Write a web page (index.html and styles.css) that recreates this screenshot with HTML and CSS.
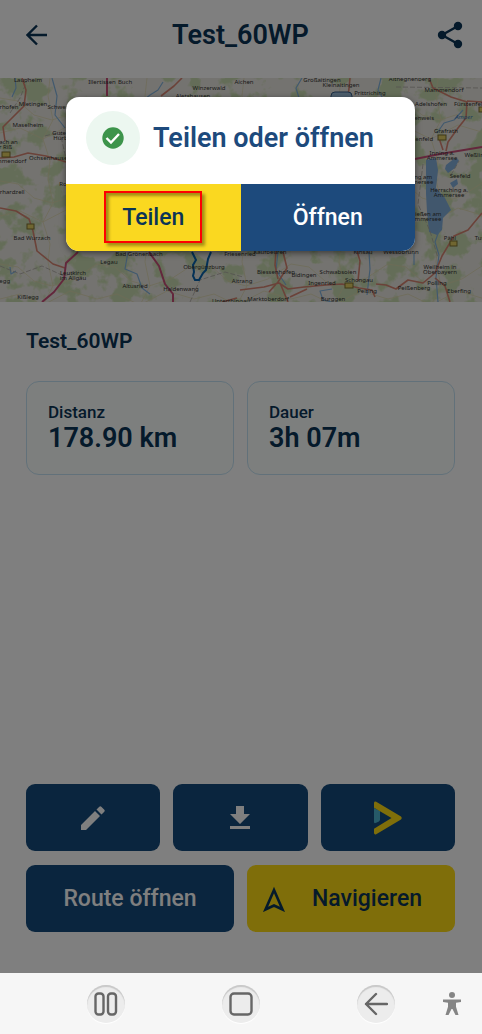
FILE: index.html
```html
<!doctype html>
<html lang="de">
<head>
	<meta charset="UTF-8">
	<meta name="viewport" content="width=device-width, initial-scale=1.0">
	<title>Test_60WP</title>
	<link rel="stylesheet" href="styles.css">
</head>
<body>
	<div class="app">
		<header class="header">
			<button class="icon-btn" type="button" aria-label="Zurück">
				<svg width="22" height="22" viewBox="0 0 22 22"><path d="M21 11H2M11 1.5 1.5 11l9.500 9.500" fill="none" stroke="#0b3456" stroke-width="2.400"/></svg>
			</button>
			<h1 class="title">Test_60WP</h1>
			<button class="icon-btn" type="button" aria-label="Route teilen">
				<svg width="26" height="28" viewBox="0 0 26 28"><path d="M21 5 5 14l16 9" fill="none" stroke="#0b3456" stroke-width="2.400"/><g fill="#0b3456"><circle cx="21" cy="5" r="4.200"/><circle cx="5" cy="14" r="4.200"/><circle cx="21" cy="23" r="4.200"/></g></svg>
			</button>
		</header>

		<svg class="map" viewBox="0 0 482 224" preserveAspectRatio="xMidYMid slice" role="img" aria-label="Karte">
			<defs>
				<!-- woods: noise cut off at a threshold -->
				<filter id="woods" x="0" y="0" width="100%" height="100%" color-interpolation-filters="sRGB">
					<feTurbulence type="fractalNoise" baseFrequency="0.045" numOctaves="4" seed="8"/>
					<feColorMatrix values="0 0 0 0 0.79  0 0 0 0 0.86  0 0 0 0 0.69  9 0 0 0 -4.5"/>
				</filter>
				<pattern id="lanes" width="97" height="83" patternUnits="userSpaceOnUse">
					<path d="M0 20l18 3 16 14 18 5 22-7 23-15M50 0l-2 18 5 24-10 19 7 22M0 55l20-5 23 11 27-14 27 8" fill="none" stroke="#dcd6ac" stroke-width=".7"/>
				</pattern>
			</defs>
			<rect width="482" height="224" fill="#e9e7e0"/>
			<rect width="482" height="224" filter="url(#woods)"/>
			<rect width="482" height="224" fill="url(#lanes)"/>

			<g fill="#82aedb">
				<path d="M426 82l10-2 2 12-2 18 9 10 6 12-8 8-1 12-5 5-8-3-2-20-1-18z"/>
				<path d="M446 87l9-7 4 2-4 8-7 5-3-4zM450 105l7-4 1 5-5 4z"/>
			</g>
			<g class="river">
				<path d="M15 0l1 10-4 9M52 0l5 18-2 19 10 13M163 4l-5 8-8 5-10 8M302 0l-6 10 3 10M381 0l-3 12 7 12M463 32l-9 10-10 3-7 10M440 150l-5 14 4 13-3 22 2 25M414 175v12M128 174l-3 17 12 5 5 14 8 6M369 174l1 17-3 26M278 174l-2 18 10 15M10 189l1 7 5-3M332 224l-9-2-3-9 12-2"/>
			</g>
			<g class="border-line">
				<path d="M28 0l-8 20-10 15M45 58l15-4 6 27M0 188l20 8 22-8 22 10 15-5M190 224l10-22 25-8 18 5M406 30l14 10M451 97l8-14M423 86l-5 40 12 27 8 27M396 9l86 1"/>
			</g>
			<g class="road">
				<path d="M22 0l4 12-2 16-13 13-8 8 2 14M0 80l14-1 14-4 18 3 20 6M0 130l16 3 13 8 4 12 4 20 16 13 12 4M182 0l-8 8-13 10M350 0l-2 20M429 0l4 10 18 9 16 5-1 16-8 10-10 14-2 9M482 135l-14 17-14 6-12 20-7 17-12 10-15-3-12 9-10-4-10-1M443 72l-4-12M276 172l-1 15 3 14M283 174l4 16-9 14-9 10M240 212l24-3 15-4 9 6 16-2 22-2 16-1 17 4 13 2 3 7M435 200l10 8 5 16M357 173l3 10-2 20M222 224l15-4M290 219l17-8M280 205l8 19M467 23l15 1"/>
			</g>
			<g class="motorway">
				<path d="M107 0v18M78 174l-12 11-2 16-10 13-12 10M149 174l10 14 6 18 8 10v8M415 81l25-5 42-7"/>
			</g>
			<path d="M192 174l4 8-3 5 1 7-1 4 2 4 4 0 4-7 3-3 2-11 3-7" fill="none" stroke="#0863ad" stroke-width="2"/>
			<rect x="331" y="14" width="21" height="9" rx="4" fill="#9bbcdb" stroke="#365f89"/>
			<g class="shield">
				<rect x="2" y="74" width="8" height="5"/><rect x="27" y="146" width="7" height="5"/>
				<rect x="345" y="205" width="8" height="5"/><rect x="450" y="163" width="7" height="5"/>
				<rect x="438" y="57" width="8" height="5"/><rect x="479" y="29" width="7" height="5"/>
			</g>

			<g class="label">
				<text x="28" y="4">Laupheim</text><text x="102" y="6">Illertissen</text><text x="125" y="6">Buch</text>
				<text x="209" y="12">Winzerwald</text><text x="193" y="20">Aletshausen</text><text x="244" y="6">Aichen</text>
				<text x="33" y="28">Mietingen</text><text x="3" y="31">Oberhofen</text><text x="61" y="31">Schwendi</text>
				<text x="28" y="49">Maselheim</text><text x="62" y="57">Guten-</text><text x="63" y="62">Hürbel</text>
				<text x="1" y="66">Biberach an</text><text x="2" y="71">der Riß</text><text x="9" y="85">Ummendorf</text>
				<text x="50" y="82">Ochsenhausen</text><text x="64" y="108">Rot</text><text x="7" y="116">Eberhardzell</text>
				<text x="32" y="162">Bad Wurzach</text><text x="73" y="197">Leutkirch</text><text x="73" y="202">im Allgäu</text>
				<text x="28" y="221">Kißlegg</text><text x="-2" y="205">Bergegg</text><text x="109" y="186">Legau</text>
				<text x="139" y="178">Bad Grönenbach</text><text x="135" y="210">Altusried</text><text x="181" y="213">Haldenwang</text>
				<text x="204" y="191">Obergünzburg</text><text x="240" y="178">Friesenried</text><text x="242" y="205">Aitrang</text>
				<text x="231" y="225">Unterthingau</text><text x="270" y="176">Kaufbeuren</text><text x="276" y="196">Biessenhofen</text>
				<text x="304" y="199">Bidingen</text><text x="338" y="196">Schwabsoien</text><text x="322" y="207">Ingenried</text>
				<text x="359" y="204">Schongau</text><text x="367" y="215">Peiting</text><text x="268" y="223">Marktoberdorf</text>
				<text x="333" y="223">Burggen</text><text x="363" y="176">Kinsau</text><text x="401" y="176">Wessobrunn</text>
				<text x="322" y="4">Großaitingen</text><text x="341" y="9">Kleinaitingen</text><text x="370" y="17">Prittriching</text>
				<text x="410" y="3">Althegnenberg</text><text x="444" y="14">Mammendorf</text><text x="431" y="28">Adelshofen</text>
				<text x="470" y="28">Fürstenfeld</text><text x="418" y="42">Türkenweis</text><text x="464" y="41" class="label-water">Amper</text>
				<text x="446" y="55">Grafrath</text><text x="418" y="63">Türkenfeld</text><text x="442" y="77">Inning a.</text>
				<text x="442" y="82">Ammersee</text><text x="476" y="79">Weßling</text><text x="418" y="101">Utting am</text>
				<text x="418" y="106">Ammersee</text><text x="460" y="100">Seefeld</text><text x="449" y="114">Herrsching a.</text>
				<text x="449" y="119">Ammersee</text><text x="426" y="138">Dießen am</text><text x="426" y="143">Ammersee</text>
				<text x="450" y="162">Pähl</text><text x="485" y="162">Tutzing</text><text x="440" y="191">Weilheim in</text>
				<text x="440" y="196">Oberbayern</text><text x="437" y="207">Polling</text><text x="414" y="212">Peißenberg</text>
				<text x="459" y="215">Eberfing</text>
			</g>
		</svg>

		<main class="content">
			<h2 class="route-name">Test_60WP</h2>
			<dl class="stats">
				<div class="stat">
					<dt>Distanz</dt>
					<dd>178.90 km</dd>
				</div>
				<div class="stat">
					<dt>Dauer</dt>
					<dd>3h 07m</dd>
				</div>
			</dl>

			<div class="actions">
				<div class="row">
					<button class="btn" type="button" aria-label="Bearbeiten">
						<svg width="26" height="26" viewBox="0 0 26 26"><path d="M1 20v5h5L20 11l-5-5zM16.500 4.500l5 5 2.800-2.800q1-1 0-2L21.300 1.700q-1-1-2 0z" fill="#fff"/></svg>
					</button>
					<button class="btn" type="button" aria-label="Herunterladen">
						<svg width="20" height="24" viewBox="0 0 20 24"><path d="M6 0h8v8h6L10 18 0 8h6zM0 20h20v3H0z" fill="#fff"/></svg>
					</button>
					<button class="btn" type="button" aria-label="Abspielen">
						<svg width="28" height="34" viewBox="0 0 28 34"><path d="M0 7l6 3v8.500q0 1.500-1.500 2.300L1.500 22Q0 22.500 0 21z" fill="#4cb5d1"/><path d="M0 2Q.2 0 2.200.7L27 15.500q1.400 1.500 0 3L2.200 33.300Q.2 34 0 32v-4.200L17.500 17 0 6.800z" fill="#fedc14"/></svg>
					</button>
				</div>
				<div class="row">
					<button class="btn" type="button">Route öffnen</button>
					<button class="btn btn-yellow" type="button">
						<svg width="22" height="26" viewBox="0 0 22 26"><path d="M11 4 2.500 23.500 11 19.500l8.500 4z" fill="none" stroke="#0b3456" stroke-width="2.600"/></svg>
						<span class="btn-text">Navigieren</span>
					</button>
				</div>
			</div>
		</main>

		<div class="overlay">
			<div class="dialog" role="dialog" aria-labelledby="dialog-title">
				<div class="dialog-head">
					<span class="check">
						<svg width="22" height="22" viewBox="0 0 22 22"><circle cx="11" cy="11" r="10.700" fill="#3d944b"/><path d="M4.500 11l4.500 4.500L17 7" fill="none" stroke="#fff" stroke-width="2.400"/></svg>
					</span>
					<h2 class="dialog-title" id="dialog-title">Teilen oder öffnen</h2>
				</div>
				<div class="dialog-buttons">
					<button class="share" type="button"><span class="marked">Teilen</span></button>
					<button class="open" type="button">Öffnen</button>
				</div>
			</div>
		</div>
	</div>

	<nav class="system-bar">
		<button class="sys-btn" type="button" aria-label="Letzte Apps">
			<svg width="24" height="24" viewBox="0 0 24 24"><rect x="1.500" y="1.500" width="8" height="21" rx="3"/><rect x="14" y="1.500" width="8" height="21" rx="3"/></svg>
		</button>
		<button class="sys-btn" type="button" aria-label="Startseite">
			<svg width="24" height="24" viewBox="0 0 24 24"><rect x="1.500" y="1.500" width="21" height="21" rx="3.500"/></svg>
		</button>
		<button class="sys-btn" type="button" aria-label="Zurück">
			<svg width="24" height="24" viewBox="0 0 24 24"><path d="M23 12H2M12 2 2 12l10 10"/></svg>
		</button>
		<button class="access-btn" type="button" aria-label="Bedienungshilfe">
			<svg width="20" height="24" viewBox="0 0 20 24"><circle cx="10" cy="3" r="3"/><path d="M1 7.500h18v2.500l-5 .8v4l2.500 8.200h-3L10.500 17h-1l-3 6h-3L6 14.800v-4L1 10z"/></svg>
		</button>
	</nav>
</body>
</html>
```
FILE: styles.css
```css
* {
	box-sizing: border-box;
}

body {
	display: flex;
	flex-direction: column;
	margin: 0;
	min-height: 100vh;
	font-family: Roboto, "Liberation Sans", sans-serif;
	color: #0b3456;
	background-color: #fff;
}

h1, h2, dl, dd {
	margin: 0;
}

button {
	padding: 0;
	border: 0;
	font-family: inherit;
	color: inherit;
	background: none;
	cursor: pointer;
}

svg {
	display: block;
	flex: none;
}

.app {
	position: relative;
	display: flex;
	flex: 1;
	flex-direction: column;
}

/* header */
.header {
	display: flex;
	align-items: center;
	justify-content: space-between;
	padding: 0 18px 8px 23px;
	height: 78px;
}

.icon-btn {
	display: flex;
	align-items: center;
	justify-content: center;
	width: 28px;
	height: 40px;
}

.title {
	padding-right: 6px;
	font-size: 27px;
	font-weight: 600;
	line-height: 32px;
}

/* map */
.map {
	width: 100%;
	height: 224px;
}

.river,
.border-line,
.road,
.motorway {
	fill: none;
	stroke-linejoin: round;
}

.river {
	stroke: #83b3dd;
	stroke-width: 1.2;
}

.border-line {
	stroke: #a9a6a1;
	stroke-width: 0.8;
	stroke-dasharray: 5 2;
}

.road {
	stroke: #d68472;
	stroke-width: 1.6;
}

.motorway {
	stroke: #c64f79;
	stroke-width: 2;
}

.shield {
	fill: #e0cd62;
	stroke: #7c7030;
}

.label {
	font: 6px "Noto Sans", sans-serif;
	text-anchor: middle;
	fill: #333;
}

.label-water {
	font-style: italic;
	fill: #3a78b8;
}

/* content */
.content {
	display: flex;
	flex: 1;
	flex-direction: column;
	padding: 25px 27px 41px 26px;
}

.route-name {
	font-size: 21px;
	font-weight: 600;
	line-height: 28px;
}

.stats {
	display: grid;
	grid-template-columns: 1fr 1fr;
	gap: 13px;
	margin-top: 26px;
}

.stat {
	padding: 19px 21px 21px;
	border: 1px solid #c5e3f4;
	border-radius: 13px;
	background-color: #fbfffd;
}

.stat dt {
	font-size: 17px;
	font-weight: 500;
	line-height: 22px;
}

.stat dd {
	font-size: 27px;
	font-weight: 600;
	line-height: 30px;
}

.actions {
	display: flex;
	flex-direction: column;
	gap: 14px;
	margin-top: auto;
}

.row {
	display: grid;
	grid-auto-flow: column;
	grid-auto-columns: 1fr;
	gap: 13px;
}

.btn {
	display: flex;
	align-items: center;
	justify-content: center;
	height: 67px;
	border-radius: 9px;
	font-size: 23px;
	font-weight: 500;
	color: #fff;
	background-color: #154a7c;
}

.btn-yellow {
	padding: 0 16px;
	color: #0b3456;
	background-color: #fedc14;
}

.btn-text {
	flex: 1;
	padding-left: 10px;
}

/* dialog */
.overlay {
	position: absolute;
	inset: 0;
	padding: 97px 67px 0 66px;
	background-color: rgba(0, 0, 0, 0.5);
}

.dialog {
	overflow: hidden;
	border-radius: 13px;
	background-color: #fff;
	box-shadow: 0 2px 6px rgba(0, 0, 0, 0.5);
}

.dialog-head {
	display: flex;
	align-items: center;
	gap: 13px;
	padding: 0 20px 6px;
	height: 87px;
}

.check {
	display: flex;
	flex: none;
	align-items: center;
	justify-content: center;
	width: 54px;
	height: 54px;
	border-radius: 50%;
	background-color: #ecf7f0;
}

.dialog-title {
	font-size: 27px;
	font-weight: 600;
	color: #1d4a7c;
}

.dialog-buttons {
	display: flex;
}

.share,
.open {
	display: flex;
	flex: 1;
	align-items: center;
	justify-content: center;
	height: 67px;
	font-size: 23px;
	font-weight: 500;
}

.share {
	padding-bottom: 2px;
	background-color: #fad820;
}

.open {
	color: #fff;
	background-color: #1d4a7c;
}

.marked {
	padding: 1px 16px 0;
	border: 2px solid #f00;
	line-height: 47px;
	box-shadow: 3px 3px 3px rgba(0, 0, 0, 0.35), inset 3px 3px 3px rgba(0, 0, 0, 0.35);
}

/* android bar */
.system-bar {
	display: grid;
	grid-template-columns: 38px 1fr 38px 1fr 38px 47px 20px;
	align-items: center;
	padding: 0 20px 0 87px;
	height: 61px;
	background-color: #f6f6f6;
}

.sys-btn {
	display: flex;
	align-items: center;
	justify-content: center;
	width: 38px;
	height: 38px;
	border-radius: 50%;
	background-color: #ececec;
	box-shadow: inset 0 2px 1px #c8c8c8, 0 1px 1px #fff;
}

.sys-btn:nth-child(2) {
	grid-column: 3;
}

.sys-btn:nth-child(3) {
	grid-column: 5;
}

.sys-btn svg {
	fill: none;
	stroke: #666;
	stroke-width: 2.4;
	stroke-linecap: round;
	stroke-linejoin: round;
}

.access-btn {
	grid-column: 7;
}

.access-btn svg {
	fill: #858585;
}
```
